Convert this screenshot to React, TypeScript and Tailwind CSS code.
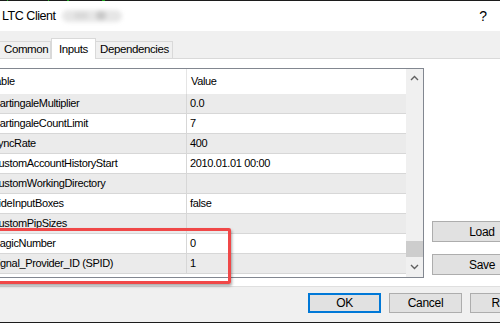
import React from 'react';

const rows: { name: string; value: string }[] = [
  { name: 'MartingaleMultiplier', value: '0.0' },
  { name: 'MartingaleCountLimit', value: '7' },
  { name: 'SyncRate', value: '400' },
  { name: 'CustomAccountHistoryStart', value: '2010.01.01 00:00' },
  { name: 'CustomWorkingDirectory', value: '' },
  { name: 'HideInputBoxes', value: 'false' },
  { name: 'CustomPipSizes', value: '' },
  { name: 'MagicNumber', value: '0' },
  { name: 'Signal_Provider_ID (SPID)', value: '1' },
];

function Chevron({ up }: { up?: boolean }) {
  return (
    <svg width="9" height="6" viewBox="0 0 9 6" className="block">
      <path
        d={up ? 'M1 5 L4.5 1.5 L8 5' : 'M1 1 L4.5 4.5 L8 1'}
        fill="none"
        stroke="#606060"
        strokeWidth="1.4"
      />
    </svg>
  );
}

function Button({ label, focus, className = '' }: { label: string; focus?: boolean; className?: string }) {
  return (
    <div
      className={`flex items-center justify-center shrink-0 bg-[#e1e1e1] text-[12px] tracking-[-0.3px] text-black ${
        focus ? 'border-2 border-[#0078d7]' : 'border border-[#adadad]'
      } ${className}`}
    >
      {label}
    </div>
  );
}

export default function App() {
  return (
    <div
      className="relative w-[500px] h-[323px] overflow-hidden bg-white flex flex-col text-black"
      style={{ fontFamily: '"Liberation Sans", Arial, sans-serif' }}
    >
      {/* top edge of the window behind */}
      <div className="h-px bg-[#1c1c1c] shrink-0 flex">
        <div className="ml-[7px] w-px bg-[#19a019]" />
        <div className="ml-[40px] w-px bg-[#19a019]" />
        <div className="ml-[18px] w-[2px] bg-[#19a019]" />
        <div className="ml-[33px] w-[3px] bg-[#19a019]" />
      </div>

      {/* title bar */}
      <div className="h-[30px] shrink-0 flex items-center bg-white">
        <span className="ml-[2px] text-[12.5px] tracking-[-0.45px]">LTC Client</span>
        <div className="ml-[4px] relative w-[64px] h-[16px] blur-[2px]">
          <div className="absolute left-[2px] top-[2px] w-[60px] h-[12px] rounded-md bg-[#e6e6e6]" />
          <div className="absolute left-[36px] top-[3px] w-[10px] h-[9px] rounded-full bg-[#c8c8c8]" />
          <div className="absolute left-[14px] top-[4px] w-[14px] h-[7px] rounded-full bg-[#d9d9d9]" />
        </div>
        <span className="ml-auto mr-[13px] text-[14px]">?</span>
      </div>

      {/* tabs */}
      <div className="h-[28px] shrink-0 bg-[#f0f0f0] border-b border-[#d9d9d9] flex items-end text-[11.5px] tracking-[-0.4px]">
        <div className="w-[51px] h-[17px] border border-b-0 border-l-0 border-[#d9d9d9] flex items-center pl-[4px]">
          Common
        </div>
        <div className="w-[45px] h-[21px] -mb-px bg-white border border-b-0 border-[#d9d9d9] flex items-start pt-[2px] pl-[7px]">
          Inputs
        </div>
        <div className="w-[77px] h-[17px] border border-b-0 border-l-0 border-[#d9d9d9] flex items-center pl-[4px]">
          Dependencies
        </div>
      </div>

      {/* tab page */}
      <div className="h-[227px] shrink-0 bg-white flex pt-[9px]">
        <div className="ml-[-10px] w-[434px] h-[210px] shrink-0 border border-[#828790] flex text-[11px] tracking-[-0.35px]">
          <div className="flex-1 flex flex-col">
            <div className="h-[25px] flex shrink-0">
              <div className="w-[196px] border-r border-[#e5e5e5] flex items-center overflow-hidden">
                <span className="ml-[-13px]">Variable</span>
              </div>
              <div className="flex-1 flex items-center pl-[4px]">Value</div>
            </div>
            {rows.map((r, i) => (
              <div
                key={r.name}
                className={`h-[20px] flex shrink-0 border-b border-[#d7d7d7] ${
                  i % 2 === 0 ? 'bg-[#ebebeb]' : 'bg-white'
                }`}
              >
                <div className="w-[196px] border-r border-[#d7d7d7] flex items-center overflow-hidden whitespace-nowrap">
                  {r.name}
                </div>
                <div className="flex-1 flex items-center pl-[3px] whitespace-nowrap">{r.value}</div>
              </div>
            ))}
          </div>
          {/* scrollbar */}
          <div className="w-[17px] bg-[#f0f0f0] flex flex-col items-center">
            <div className="h-[17px] flex items-center justify-center">
              <Chevron up />
            </div>
            <div className="flex-1 w-full flex flex-col justify-end">
              <div className="h-[16px] w-full bg-[#cdcdcd]" />
            </div>
            <div className="h-[20px] flex items-center justify-center">
              <Chevron />
            </div>
          </div>
        </div>
        <div className="ml-[8px] shrink-0 pt-[153px] flex flex-col gap-[12px]">
          <Button label="Load" className="w-[100px] h-[21px]" />
          <Button label="Save" className="w-[100px] h-[21px]" />
        </div>
      </div>

      {/* bottom bar */}
      <div className="h-[36px] shrink-0 bg-[#f0f0f0] border-t border-[#dfdfdf] flex pl-[308px] pt-[6px] gap-[8px]">
        <Button label="OK" focus className="w-[73px] h-[20px]" />
        <Button label="Cancel" className="w-[73px] h-[20px]" />
        <Button label="Reset" className="w-[73px] h-[20px]" />
      </div>
      <div className="h-px bg-[#1c1c1c] shrink-0" />

      {/* red highlight overlay */}
      <div className="absolute left-[-10px] top-[228px] w-[241px] h-[56px] border-[3px] border-[#f04848] rounded-[2px] shadow-[1px_2px_3px_rgba(0,0,0,0.35)]" />
    </div>
  );
}
